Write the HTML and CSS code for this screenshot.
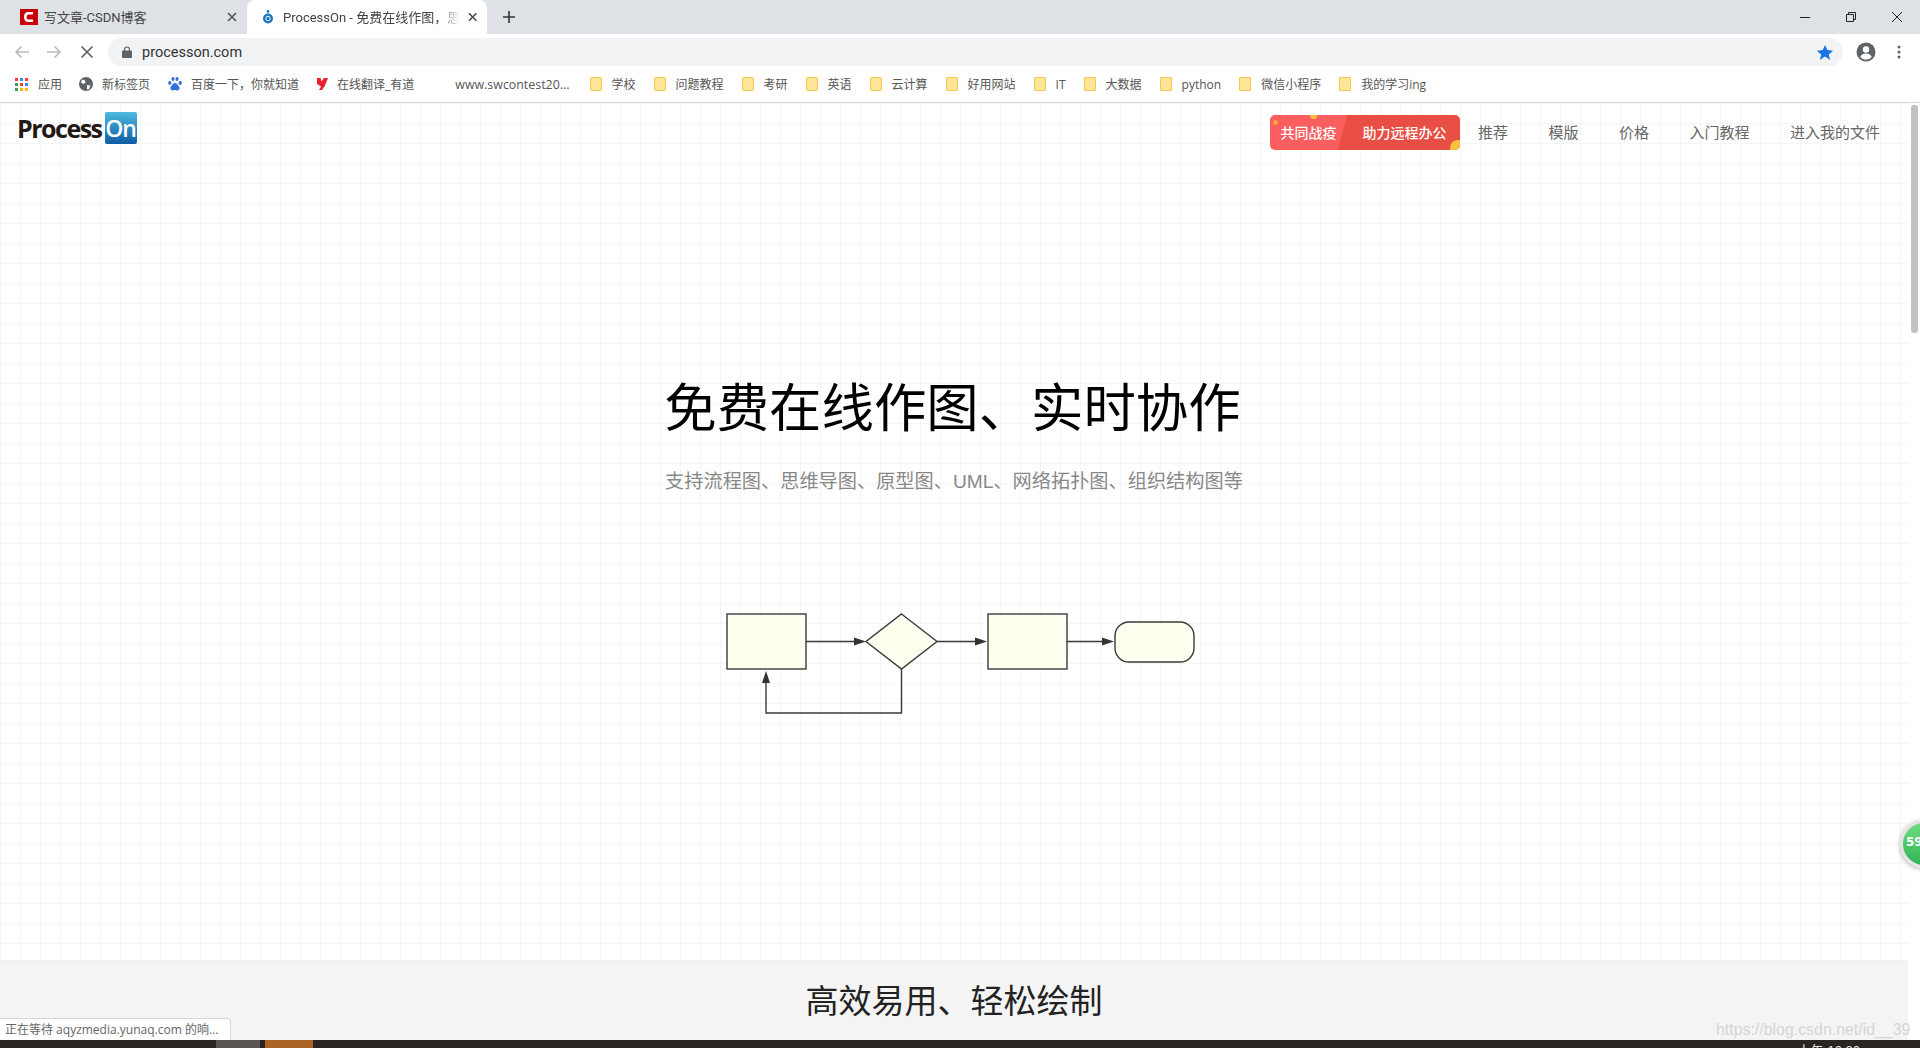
FILE: index.html
```html
<!DOCTYPE html>
<html lang="zh-CN">
<head>
    <meta charset="UTF-8">
    <title>ProcessOn - 免费在线作图</title>
    <link rel="stylesheet" href="styles.css">
</head>
<body>

    <!-- Browser tabs -->
    <div class="tab-strip">
        <div class="tab">
            <svg class="tab-icon" width="18" height="16" viewBox="0 0 18 16"><rect width="18" height="16" fill="#c9000b"/><path d="M13 4.2H8.500C6.600 4.200 5.300 5.600 5.300 8s1.300 3.800 3.200 3.800H13" fill="none" stroke="#fff" stroke-width="2.600"/></svg>
            <span class="tab-title">写文章-CSDN博客</span>
            <svg class="tab-close" width="10" height="10" viewBox="0 0 10 10"><path d="M1 1l8 8M9 1l-8 8" stroke="#555" stroke-width="1.600"/></svg>
        </div>
        <div class="tab tab-active">
            <svg class="tab-icon" width="12" height="14" viewBox="0 0 12 14"><circle cx="6" cy="8.500" r="5" fill="#1c78b8"/><circle cx="6" cy="1.500" r="1.400" fill="#1c78b8"/><circle cx="6" cy="8.500" r="2.200" fill="none" stroke="#fff"/></svg>
            <span class="tab-title">ProcessOn - 免费在线作图，思维</span>
            <svg class="tab-close" width="10" height="10" viewBox="0 0 10 10"><path d="M1 1l8 8M9 1l-8 8" stroke="#444" stroke-width="1.600"/></svg>
        </div>
        <svg class="tab-new" width="12" height="12" viewBox="0 0 12 12"><path d="M6 0v12M0 6h12" stroke="#333" stroke-width="1.600"/></svg>
        <div class="window-controls">
            <svg width="12" height="12" viewBox="0 0 12 12"><path d="M1 6.500h10" stroke="#222"/></svg>
            <svg width="12" height="12" viewBox="0 0 12 12"><path d="M1.500 3.500h7v7h-7zM3.500 3.500v-2h7v7h-2" fill="none" stroke="#222"/></svg>
            <svg width="12" height="12" viewBox="0 0 12 12"><path d="M1 1l10 10M11 1L1 11" stroke="#222"/></svg>
        </div>
    </div>

    <!-- Address bar -->
    <div class="toolbar">
        <svg class="tool-icon" width="16" height="14" viewBox="0 0 16 14"><path d="M15 7H2M7.500 1.500L2 7l5.500 5.500" fill="none" stroke="#bcbcbc" stroke-width="1.700"/></svg>
        <svg class="tool-icon" width="16" height="14" viewBox="0 0 16 14"><path d="M1 7h13M8.500 1.500L14 7l-5.500 5.500" fill="none" stroke="#bcbcbc" stroke-width="1.700"/></svg>
        <svg class="tool-icon" width="14" height="14" viewBox="0 0 14 14"><path d="M1.500 1.500l11 11M12.500 1.500l-11 11" stroke="#5f6368" stroke-width="1.700"/></svg>
        <div class="omnibox">
            <svg width="10" height="12" viewBox="0 0 10 12"><path d="M2.500 5V3.500a2.500 2.500 0 0 1 5 0V5" fill="none" stroke="#5f6368" stroke-width="1.200"/><rect y="4.600" width="10" height="7.400" rx="1" fill="#5f6368"/></svg>
            <span class="omnibox-url">processon.com</span>
            <svg class="omnibox-star" width="16" height="15" viewBox="0 0 16 15"><path d="M8 0l2.300 5.100 5.700.6-4.200 3.700 1.200 5.600L8 11.600 3 15l1.200-5.600L0 5.700l5.700-.6z" fill="#1a73e8"/></svg>
        </div>
        <svg class="profile-icon" width="20" height="20" viewBox="0 0 20 20"><circle cx="10" cy="10" r="9.500" fill="#5f6368"/><circle cx="10" cy="7.500" r="3.200" fill="#fff"/><path d="M4.200 15c1-2.600 3.400-3.600 5.800-3.600s4.800 1 5.800 3.600a7.600 7.600 0 0 1-11.600 0z" fill="#fff"/></svg>
        <svg class="menu-icon" width="4" height="14" viewBox="0 0 4 14"><circle cx="2" cy="2" r="1.500" fill="#5f6368"/><circle cx="2" cy="7" r="1.500" fill="#5f6368"/><circle cx="2" cy="12" r="1.500" fill="#5f6368"/></svg>
    </div>

    <!-- Bookmarks -->
    <div class="bookmarks">
        <div class="bookmark bookmark-apps">
            <svg width="13" height="13" viewBox="0 0 13 13"><rect width="3" height="3" fill="#ea4335"/><rect x="5" width="3" height="3" fill="#4285f4"/><rect x="10" width="3" height="3" fill="#ea4335"/><rect y="5" width="3" height="3" fill="#34a853"/><rect x="5" y="5" width="3" height="3" fill="#ea4335"/><rect x="10" y="5" width="3" height="3" fill="#4285f4"/><rect y="10" width="3" height="3" fill="#34a853"/><rect x="5" y="10" width="3" height="3" fill="#fbbc05"/><rect x="10" y="10" width="3" height="3" fill="#fbbc05"/></svg>
            <span>应用</span>
        </div>
        <div class="bookmark bookmark-site">
            <svg width="14" height="14" viewBox="0 0 14 14"><circle cx="7" cy="7" r="7" fill="#5f6368"/><path d="M3 2.500l3 1 .5 2-2 1.500-2.500-1.500zM8 8l3.500.5-1.500 3.500-2 .5z" fill="#fff"/></svg>
            <span>新标签页</span>
        </div>
        <div class="bookmark bookmark-site">
            <svg width="14" height="14" viewBox="0 0 14 14" fill="#2f6fdc"><ellipse cx="1.800" cy="6" rx="1.600" ry="2"/><ellipse cx="5" cy="2" rx="1.500" ry="2"/><ellipse cx="9" cy="2" rx="1.500" ry="2"/><ellipse cx="12.200" cy="6" rx="1.600" ry="2"/><path d="M7 6c2 0 2.500 2 4 3.500 1.200 1.500.5 4-2 4-1 0-1.400-.4-2-.4s-1 .4-2 .4c-2.500 0-3.200-2.500-2-4C4.500 8 5 6 7 6z"/></svg>
            <span>百度一下，你就知道</span>
        </div>
        <div class="bookmark bookmark-site">
            <svg width="11" height="12" viewBox="0 0 11 12"><path d="M0 0h3.500l1 3.500L7 0h4L7.500 8.500 5 12H2l2-3.500L0 6z" fill="#e8222e"/></svg>
            <span>在线翻译_有道</span>
        </div>
        <div class="bookmark bookmark-text">www.swcontest20...</div>
        <div class="bookmark"><i class="folder"></i><span>学校</span></div>
        <div class="bookmark"><i class="folder"></i><span>问题教程</span></div>
        <div class="bookmark"><i class="folder"></i><span>考研</span></div>
        <div class="bookmark"><i class="folder"></i><span>英语</span></div>
        <div class="bookmark"><i class="folder"></i><span>云计算</span></div>
        <div class="bookmark"><i class="folder"></i><span>好用网站</span></div>
        <div class="bookmark"><i class="folder"></i><span>IT</span></div>
        <div class="bookmark"><i class="folder"></i><span>大数据</span></div>
        <div class="bookmark"><i class="folder"></i><span>python</span></div>
        <div class="bookmark"><i class="folder"></i><span>微信小程序</span></div>
        <div class="bookmark"><i class="folder"></i><span>我的学习ing</span></div>
    </div>

    <div class="viewport">
        <div class="page">
            <div class="hero">
                <div class="site-header">
                    <a class="logo" href="#"><span class="logo-process">Process</span><span class="logo-on">On</span></a>
                    <div class="site-nav">
                        <a class="promo" href="#">
                            <span class="promo-left">共同战疫</span>
                            <span class="promo-right">助力远程办公</span>
                            <i class="promo-dot dot-top"></i>
                            <i class="promo-dot dot-left"></i>
                            <i class="promo-dot dot-corner"></i>
                        </a>
                        <a class="nav-link" href="#">推荐</a>
                        <a class="nav-link" href="#">模版</a>
                        <a class="nav-link" href="#">价格</a>
                        <a class="nav-link" href="#">入门教程</a>
                        <a class="nav-link" href="#">进入我的文件</a>
                    </div>
                </div>

                <h1 class="hero-title">免费在线作图、实时协作</h1>
                <p class="hero-sub">支持流程图、思维导图、原型图、UML、网络拓扑图、组织结构图等</p>

                <svg class="flow-chart" width="470" height="104" viewBox="0 0 470 104">
                    <g fill="#fffff0" stroke="#3a3a3a" stroke-width="1.400">
                        <rect x="1" y="1" width="79" height="55"/>
                        <path d="M175.500 1L211 28.500 175.500 56 140 28.500z"/>
                        <rect x="262" y="1" width="79" height="55"/>
                        <rect x="389" y="9" width="79" height="40" rx="14"/>
                    </g>
                    <g fill="none" stroke="#3a3a3a" stroke-width="1.400">
                        <path d="M80 28.500h49M211 28.500h40M341 28.500h37M175.500 56v44H40V70"/>
                    </g>
                    <g fill="#333">
                        <path d="M140 28.500l-12-4v8z"/>
                        <path d="M261 28.500l-12-4v8z"/>
                        <path d="M388 28.500l-12-4v8z"/>
                        <path d="M40 58l-4 12h8z"/>
                    </g>
                </svg>
            </div>
            <div class="features">
                <h2 class="features-title">高效易用、轻松绘制</h2>
            </div>
        </div>
        <div class="scrollbar"><div class="scrollbar-thumb"></div></div>
    </div>

    <div class="taskbar">
        <span class="task-item task-grey"></span>
        <span class="task-item task-orange"></span>
        <span class="task-clock">上午 10:20</span>
    </div>

    <!-- Things lying over the page -->
    <div class="status-bubble">正在等待 aqyzmedia.yunaq.com 的响...</div>
    <div class="speed-ball"><span>59</span></div>
    <div class="watermark">https://blog.csdn.net/id__39</div>

</body>
</html>
```

FILE: styles.css
```css
/* Screenshot of the ProcessOn home page inside a Chrome window */

* {
    box-sizing: border-box;
}

body {
    margin: 0;
    height: 1048px;
    overflow: hidden;
    position: relative;
    display: flex;
    flex-direction: column;
    background-color: #fff;
    font-family: "Liberation Sans", "Noto Sans CJK SC", sans-serif;
    color: #333;
}

a {
    text-decoration: none;
    color: inherit;
}

/* Tab strip */
.tab-strip {
    height: 34px;
    flex-shrink: 0;
    display: flex;
    align-items: center;
    background-color: #dee1e6;
}

.tab {
    width: 247px;
    height: 34px;
    padding: 0 10px 0 20px;
    display: flex;
    align-items: center;
    font-family: Roboto, "Noto Sans CJK SC", sans-serif;
    font-size: 13px;
    color: #444;
}

.tab-icon {
    flex-shrink: 0;
    margin-right: 6px;
}

.tab-title {
    flex-grow: 1;
    min-width: 0;
    margin-top: -2px;
    overflow: hidden;
    white-space: nowrap;
}

.tab-active {
    width: 240px;
    padding-left: 15px;
    background-color: #fff;
    border-radius: 8px 8px 0 0;
}

.tab-active .tab-icon {
    margin-right: 9px;
}

.tab-active .tab-title {
    margin-right: 8px;
    -webkit-mask-image: linear-gradient(to right, #000 88%, transparent);
    mask-image: linear-gradient(to right, #000 88%, transparent);
}

.tab-new {
    margin-left: 16px;
}

.window-controls {
    margin-left: auto;
    padding-right: 17px;
    display: flex;
    gap: 34px;
}

/* Address bar */
.toolbar {
    height: 34px;
    flex-shrink: 0;
    padding: 4px 0 2px 14px;
    display: flex;
    align-items: center;
    background-color: #fff;
}

.tool-icon {
    margin-right: 16px;
}

.tool-icon:nth-child(3) {
    margin-left: 2px;
    margin-right: 14px;
}

.omnibox {
    width: 1735px;
    height: 28px;
    padding: 0 10px 0 14px;
    display: flex;
    align-items: center;
    background-color: #f1f3f4;
    border-radius: 14px;
}

.omnibox-url {
    margin-left: 10px;
    font-family: Roboto, sans-serif;
    font-size: 14.500px;
    color: #333;
}

.omnibox-star {
    margin-left: auto;
}

.profile-icon {
    margin-left: 13px;
}

.menu-icon {
    margin-left: 21px;
}

/* Bookmarks */
.bookmarks {
    height: 35px;
    flex-shrink: 0;
    padding: 0 0 2px 15px;
    display: flex;
    align-items: center;
    gap: 18px;
    background-color: #fff;
    border-bottom: 1px solid #d6d6d6;
    font-family: "Open Sans", "Noto Sans CJK SC", sans-serif;
    font-size: 12px;
    color: #555;
}

.bookmark {
    display: flex;
    align-items: center;
    gap: 10px;
    white-space: nowrap;
}

.bookmark-apps {
    margin-right: -1px;
}

.bookmark-site {
    gap: 9px;
}

.bookmark-text {
    margin-left: 23px;
    margin-right: 2px;
    font-size: 12.400px;
}

.folder {
    display: block;
    width: 12px;
    height: 14px;
    background-color: #ffe597;
    border: 1px solid #f2c94c;
    border-radius: 1px;
}

/* Page area + scrollbar */
.viewport {
    flex-grow: 1;
    min-height: 0;
    display: flex;
}

.page {
    flex-grow: 1;
    min-width: 0;
    display: flex;
    flex-direction: column;
}

.hero {
    height: 857px;
    flex-shrink: 0;
    display: flex;
    flex-direction: column;
    align-items: center;
    background-color: #fff;
    background-image: linear-gradient(#f5f5f5 1px, transparent 1px), linear-gradient(90deg, #f5f5f5 1px, transparent 1px);
    background-size: 20px 20px;
}

.site-header {
    width: 100%;
    height: 52px;
    padding: 8px 28px 0 17px;
    display: flex;
    justify-content: space-between;
    align-items: flex-start;
}

.logo {
    display: flex;
    align-items: center;
    gap: 3px;
}

.logo-process {
    font-family: "Open Sans", sans-serif;
    font-size: 25px;
    font-weight: 700;
    letter-spacing: -1.500px;
    color: #231815;
}

.logo-on {
    width: 32px;
    height: 32px;
    display: flex;
    align-items: center;
    justify-content: center;
    background: linear-gradient(#4dbbe0, #0f5ca6);
    border-radius: 2px;
    font-family: "Open Sans", sans-serif;
    font-size: 23px;
    font-weight: 600;
    letter-spacing: -1px;
    color: #fff;
}

.site-nav {
    padding-top: 4px;
    display: flex;
    align-items: center;
    gap: 40.500px;
    font-size: 15px;
    color: #666;
}

.nav-link {
    margin-top: -2px;
    white-space: nowrap;
}

.promo {
    position: relative;
    width: 190px;
    height: 35px;
    margin-right: -23px;
    padding: 0 14px 2px 10px;
    display: flex;
    align-items: center;
    justify-content: space-between;
    overflow: hidden;
    border-radius: 5px;
    background: linear-gradient(105deg, #fb5e5e 0, #fb5e5e 74px, #e94e44 75px);
    font-size: 14px;
    font-weight: 500;
    color: #fff;
}

.promo-dot {
    position: absolute;
    border-radius: 50%;
    background-color: #f7c23e;
}

.dot-top {
    top: -3px;
    left: 40px;
    width: 7px;
    height: 7px;
}

.dot-left {
    top: 5px;
    left: 3px;
    width: 5px;
    height: 5px;
    background-color: #f9a13a;
}

.dot-corner {
    right: -6px;
    bottom: -6px;
    width: 16px;
    height: 16px;
}

.hero-title {
    margin: 224px 3px 0 0;
    font-size: 52.400px;
    font-weight: normal;
    line-height: 60px;
    color: #000;
}

.hero-sub {
    margin: 28px 0 0;
    font-size: 19.200px;
    line-height: 30px;
    color: #888;
}

.flow-chart {
    margin: 116px 0 0 14px;
}

.features {
    flex-grow: 1;
    background-color: #f4f4f4;
    border-top: 1px solid #efefef;
}

.features-title {
    margin: 0;
    font-size: 33px;
    font-weight: normal;
    line-height: 82px;
    text-align: center;
    color: #222;
}

.scrollbar {
    width: 12px;
    flex-shrink: 0;
    padding: 2px 2px 0 3px;
    background-color: #fff;
}

.scrollbar-thumb {
    height: 228px;
    background-color: #c1c1c1;
    border-radius: 3px;
}

/* Windows taskbar, only its top edge shows */
.taskbar {
    height: 8px;
    flex-shrink: 0;
    overflow: hidden;
    position: relative;
    display: flex;
    background-color: #2a2422;
}

.task-item {
    height: 8px;
}

.task-grey {
    width: 44px;
    margin-left: 216px;
    background-color: #5a5552;
}

.task-orange {
    width: 48px;
    margin-left: 5px;
    background-color: #a96426;
}

.task-clock {
    margin-left: auto;
    margin-right: 60px;
    padding-top: 4px;
    font-size: 13px;
    line-height: 14px;
    color: #e8e8e8;
    white-space: nowrap;
}

/* Overlays */
.status-bubble {
    position: absolute;
    left: 0;
    bottom: 8px;
    width: 231px;
    height: 22px;
    padding-left: 5px;
    background-color: #fff;
    border: 1px solid #d6d6d6;
    border-width: 1px 1px 0 0;
    border-radius: 0 4px 0 0;
    font-family: "Open Sans", "Noto Sans CJK SC", sans-serif;
    font-size: 12px;
    line-height: 21px;
    color: #666;
    white-space: nowrap;
}

.speed-ball {
    position: absolute;
    left: 1900px;
    top: 820px;
    width: 48px;
    height: 48px;
    padding: 12px 0 0 3px;
    background: linear-gradient(#6fdc7f, #2fb458);
    border: 3px solid #e4e4e4;
    border-radius: 50%;
    box-shadow: 0 1px 4px rgba(0, 0, 0, 0.35);
    font-family: "DejaVu Sans", sans-serif;
    font-size: 12px;
    font-weight: bold;
    color: #fff;
}

.watermark {
    position: absolute;
    left: 1716px;
    top: 1019px;
    width: 204px;
    overflow: hidden;
    font-size: 15.900px;
    line-height: 22px;
    color: rgba(190, 190, 190, 0.6);
    white-space: nowrap;
}
```
